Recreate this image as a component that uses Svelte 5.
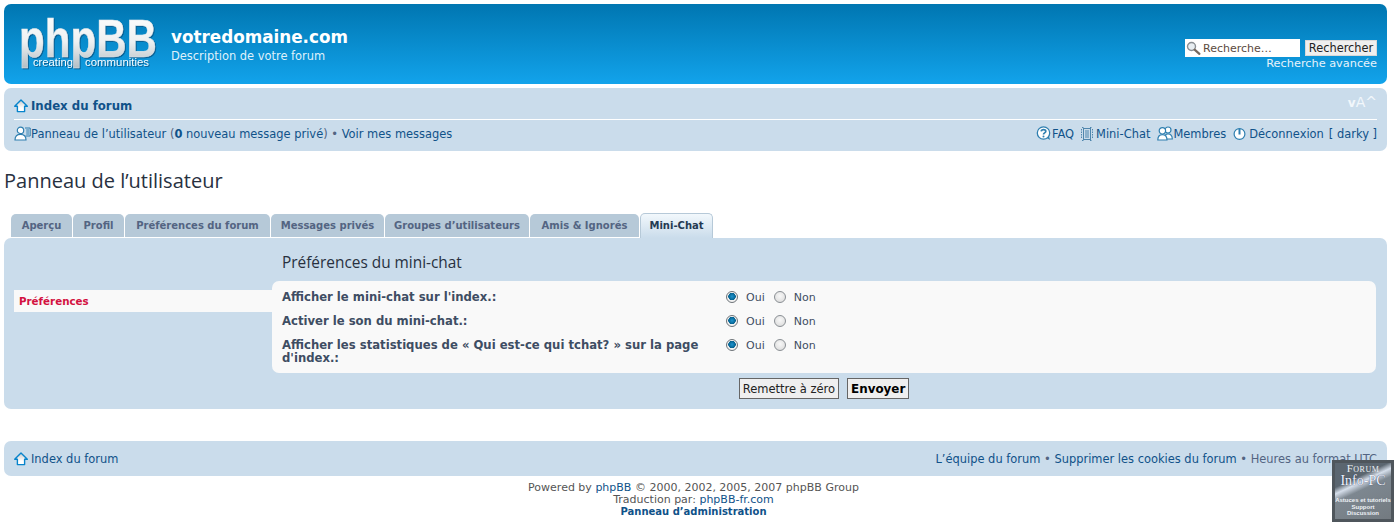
<script>
  const tabs = [
    { name: "Aperçu", width: 61 },
    { name: "Profil", width: 51 },
    { name: "Préférences du forum", width: 145 },
    { name: "Messages privés", width: 113 },
    { name: "Groupes d’utilisateurs", width: 144 },
    { name: "Amis & Ignorés", width: 109 },
    { name: "Mini-Chat", width: 73 },
  ];
  const active = "Mini-Chat";
  const options = [
    { label: "Afficher le mini-chat sur l'index.:", name: "index" },
    { label: "Activer le son du mini-chat.:", name: "sound" },
    { label: "Afficher les statistiques de « Qui est-ce qui tchat? » sur la page d'index.:", name: "stats" },
  ];
</script>

{#snippet home()}
  <svg class="ico" width="14" height="14" viewBox="0 0 14 14">
    <defs>
      <linearGradient id="roof" x1="0" y1="0" x2="0" y2="1">
        <stop offset="0" stop-color="#c9c9c9" />
        <stop offset="0.7" stop-color="#ffffff" />
      </linearGradient>
    </defs>
    <path d="M7 1 L13.3 7.2 H10.6 V12.6 H3.4 V7.2 H0.7 Z" fill="url(#roof)" stroke="#0784cc" stroke-width="1.4" stroke-linejoin="round" />
  </svg>
{/snippet}

<div class="wrap">
  <header class="headerbar">
    <a class="logo" href="#top" aria-label="phpBB">
      <svg width="140" height="52" viewBox="0 0 140 52">
        <defs>
          <linearGradient id="chrome" x1="0" y1="0" x2="0" y2="1">
            <stop offset="0" stop-color="#ffffff" />
            <stop offset="0.55" stop-color="#eef1f2" />
            <stop offset="1" stop-color="#b4bec4" />
          </linearGradient>
        </defs>
        <text x="0" y="38" class="logo-main" textLength="138" lengthAdjust="spacingAndGlyphs">phpBB</text>
        <text x="14" y="47" class="logo-sub" textLength="40" lengthAdjust="spacingAndGlyphs">creating</text>
        <text x="66" y="47" class="logo-sub" textLength="64" lengthAdjust="spacingAndGlyphs">communities</text>
      </svg>
    </a>
    <div class="site">
      <h1>votredomaine.com</h1>
      <p>Description de votre forum</p>
    </div>
    <div class="search">
      <div class="search-row">
        <div class="search-box">
          <svg width="15" height="14" viewBox="0 0 15 14">
            <circle cx="5.5" cy="5.5" r="4" fill="#e8eef2" stroke="#8a8f94" stroke-width="1.4" />
            <path d="M8.6 8.6 L13.4 12.8" stroke="#77695f" stroke-width="2.2" stroke-linecap="round" />
          </svg>
          <span>Recherche…</span>
        </div>
        <button class="search-btn">Rechercher</button>
      </div>
      <a href="#adv">Recherche avancée</a>
    </div>
  </header>

  <nav class="navbar">
    <div class="nav-top">
      <a class="crumb" href="#index">{@render home()}Index du forum</a>
      <span class="fontsize"><small>v</small>A^</span>
    </div>
    <div class="nav-bottom">
      <div class="nav-left">
        <svg class="ico" width="17" height="15" viewBox="0 0 17 15" fill="none">
          <path d="M11 2 H16.2 V10 H11.5 M12.2 4 H15.2 M12.2 6 H15.2 M12.2 8 H15.2" stroke="#2f7fb0" stroke-width="1" />
          <circle cx="6.5" cy="4.4" r="3.2" fill="#fff" stroke="#2f7fb0" stroke-width="1.2" />
          <path d="M1 14 C1 10 3 8.4 6.5 8.4 C10 8.4 12 10 12 14 Z" fill="#fff" stroke="#2f7fb0" stroke-width="1.2" />
        </svg><a href="#ucp">Panneau de l’utilisateur</a> (<a href="#pm"><b>0</b> nouveau message privé</a>) • <a href="#view">Voir mes messages</a>
      </div>
      <div class="nav-right">
        <a href="#faq">
          <svg class="ico" width="16" height="15" viewBox="0 0 16 15">
            <path d="M10 11.5 L14.2 14 L12.6 9.5 Z" fill="#2f7fb0" />
            <circle cx="7.5" cy="7" r="6.2" fill="#fff" stroke="#2f7fb0" stroke-width="1.3" />
            <path d="M5.2 5.4 C5.4 2.9 9.8 3 9.8 5.3 C9.8 6.9 7.5 6.8 7.5 8.4" fill="none" stroke="#2f7fb0" stroke-width="1.7" />
            <circle cx="7.5" cy="10.6" r="1" fill="#2f7fb0" />
          </svg>FAQ</a>
        <a href="#chat">
          <svg class="ico gap" width="12" height="14" viewBox="0 0 12 14" fill="none" stroke="#4f86ad" stroke-width="1">
            <rect x="2.5" y="1.5" width="7" height="11" />
            <path d="M4 4 H8 M4 6 H8 M4 8 H8 M4 10 H8" />
            <path d="M0.5 2 V12 M11.5 2 V12 M1 0.5 H3 M9 0.5 H11 M1 13.5 H3 M9 13.5 H11" stroke-dasharray="1.5 1" />
          </svg>Mini-Chat</a>
        <a href="#members">
          <svg class="ico" width="16" height="15" viewBox="0 0 16 15" fill="#fff" stroke="#2f7fb0" stroke-width="1.2">
            <circle cx="11" cy="4" r="3" />
            <path d="M7.5 13 C7.5 9.4 9 7.8 11 7.8 C13.4 7.8 15.3 9.4 15.3 13 Z" />
            <circle cx="5.4" cy="4.8" r="3.2" />
            <path d="M0.8 14 C0.8 10.2 2.8 8.6 5.4 8.6 C8 8.6 10 10.2 10 14 Z" />
          </svg>Membres</a>
        <a href="#logout">
          <svg class="ico gap" width="13" height="14" viewBox="0 0 13 14" fill="#fff" stroke="#2f7fb0" stroke-width="1.2">
            <circle cx="6.5" cy="7" r="5.4" />
            <path d="M6.5 1.5 V7.5" stroke-width="2" />
          </svg>Déconnexion<span class="user">[ darky ]</span></a>
      </div>
    </div>
  </nav>

  <h2>Panneau de l’utilisateur</h2>

  <ul class="tabs">
    {#each tabs as tab}
      <li class:active={tab.name === active} style="width: {tab.width}px"><a href="#tab">{tab.name}</a></li>
    {/each}
  </ul>

  <section class="panel">
    <aside class="menu">
      <a href="#prefs">Préférences</a>
    </aside>
    <div class="content">
      <h3>Préférences du mini-chat</h3>
      <form>
        <div class="fields">
          {#each options as opt}
            <div class="field">
              <label for={opt.name}>{opt.label}</label>
              <div class="choices">
                <label class="choice"><input id={opt.name} type="radio" name={opt.name} checked />Oui</label>
                <label class="choice"><input type="radio" name={opt.name} />Non</label>
              </div>
            </div>
          {/each}
        </div>
        <div class="submit">
          <button type="reset" class="btn">Remettre à zéro</button>
          <button type="button" class="btn primary">Envoyer</button>
        </div>
      </form>
    </div>
  </section>

  <nav class="navbar foot">
    <a class="crumb-plain" href="#index">{@render home()}Index du forum</a>
    <div class="foot-right">
      <a href="#team">L’équipe du forum</a> • <a href="#cookies">Supprimer les cookies du forum</a> • Heures au format UTC
    </div>
  </nav>

  <footer class="copyright">
    <div>Powered by <a href="#phpbb">phpBB</a> © 2000, 2002, 2005, 2007 phpBB Group</div>
    <div>Traduction par: <a href="#fr">phpBB-fr.com</a></div>
    <div><a class="admin" href="#acp">Panneau d’administration</a></div>
  </footer>
</div>

<div class="badge">
  <div class="badge-forum">Forum</div>
  <div class="badge-name">Info-PC</div>
  <div class="badge-tags">Astuces et tutoriels<br />Support<br />Discussion</div>
</div>

<style>
  :global(body) {
    background: #fff;
    color: #536482;
    font-family: "DejaVu Sans", Verdana, sans-serif;
    font-size: 11.45px;
    overflow: hidden;
  }

  a {
    color: #105289;
    text-decoration: none;
  }

  .wrap {
    padding: 4px 8px 0 4px;
  }

  .headerbar {
    display: flex;
    align-items: flex-start;
    height: 80px;
    box-sizing: border-box;
    padding: 15px 10px 0 15px;
    border-radius: 7px;
    background: linear-gradient(#0076b1, #12a3eb);
    color: #fff;
  }

  .logo {
    display: block;
    height: 52px;
  }

  .logo svg {
    overflow: visible;
    filter: drop-shadow(1px 1px 0 #0a5f92);
  }

  .logo-main {
    font-family: "Liberation Sans", Arial, sans-serif;
    font-size: 53px;
    font-weight: bold;
    fill: url(#chrome);
    stroke: #dfe6ea;
    stroke-width: 0.5;
  }

  .logo-sub {
    font-family: "Liberation Sans", Arial, sans-serif;
    font-size: 11px;
    fill: #fff;
  }

  .site {
    margin-left: 12px;
    padding-top: 7px;
  }

  h1 {
    margin: 0;
    font-size: 16.8px;
    line-height: 22px;
    font-weight: 600;
    font-family: "DejaVu Sans", sans-serif;
    color: #fff;
  }

  .site p {
    margin: 1px 0 0;
    font-size: 11.45px;
    line-height: 14px;
    color: #dff1fb;
  }

  .search {
    margin-left: auto;
    padding-top: 20px;
    text-align: right;
  }

  .search-row {
    display: flex;
    gap: 5px;
    align-items: center;
  }

  .search-box {
    display: flex;
    align-items: center;
    gap: 2px;
    width: 115px;
    height: 18px;
    box-sizing: border-box;
    background: #fff;
    color: #5c4a3e;
    padding-left: 1px;
    font-size: 11px;
  }

  .search-btn {
    width: 72px;
    height: 16px;
    padding: 0;
    border: 1px solid #d8d8d8;
    background: #efefef;
    color: #222;
    font: 11.4px "DejaVu Sans", sans-serif;
  }

  .search a {
    display: block;
    line-height: 14px;
    font-size: 11.3px;
    color: #e6f3fb;
  }

  .navbar {
    margin-top: 4px;
    background: #cadceb;
    border-radius: 7px;
    padding: 0 10px;
  }

  .nav-top {
    display: flex;
    justify-content: space-between;
    height: 31px;
    border-bottom: 1px solid #fff;
    align-items: center;
  }

  .crumb {
    font-weight: bold;
    font-size: 11.75px;
    display: flex;
    align-items: center;
    gap: 3px;
    padding-top: 4px;
  }

  .crumb-plain {
    display: flex;
    align-items: center;
    gap: 3px;
    padding-top: 1px;
  }

  .ico {
    flex: none;
    vertical-align: -3px;
  }

  .fontsize {
    color: #f2f7fb;
    font-size: 14px;
    line-height: 16px;
    align-self: flex-start;
    margin-top: 6px;
  }

  .fontsize small {
    font-size: 12px;
    font-weight: bold;
  }

  .nav-bottom {
    display: flex;
    justify-content: space-between;
    align-items: center;
    height: 27px;
    padding-bottom: 4px;
  }

  .nav-right {
    display: flex;
    gap: 7px;
  }

  .nav-right a {
    display: flex;
    align-items: center;
  }

  .gap {
    margin-right: 3px;
  }

  .user {
    margin-left: 5px;
  }

  h2 {
    margin: 19px 0 0;
    font-family: "Open Sans", sans-serif;
    font-size: 20px;
    line-height: 22px;
    font-weight: 400;
    color: #28313f;
  }

  .tabs {
    display: flex;
    gap: 1px;
    list-style: none;
    margin: 21px 0 0 7px;
    padding: 0;
    height: 25px;
    align-items: flex-end;
  }

  .tabs li {
    height: 23px;
    margin-bottom: 1px;
    background: #b6c9d8;
    border-radius: 5px 5px 0 0;
    text-align: center;
  }

  .tabs a {
    display: block;
    line-height: 24px;
    font-size: 10px;
    font-weight: bold;
    white-space: nowrap;
    color: #536482;
  }

  .tabs li.active {
    height: 25px;
    margin-bottom: 0;
    box-sizing: border-box;
    border: 1px solid #b6c9d8;
    border-bottom: 0;
    background: linear-gradient(#f2f8fc, #cadceb);
  }

  .tabs li.active a {
    color: #243a52;
    line-height: 23px;
  }

  .panel {
    display: flex;
    height: 171px;
    background: #cadceb;
    border-radius: 7px;
    padding: 0 11px 0 10px;
  }

  .menu {
    width: 258px;
    flex: none;
    padding-top: 52px;
  }

  .menu a {
    display: block;
    height: 22px;
    line-height: 23px;
    padding-left: 5px;
    background: #f9f9f9;
    color: #d31141;
    font-size: 10.3px;
    font-weight: bold;
  }

  .content {
    flex: 1;
    min-width: 0;
  }

  h3 {
    margin: 15px 0 0 10px;
    font-family: "Open Sans", sans-serif;
    font-size: 15.4px;
    line-height: 20px;
    font-weight: 400;
    color: #28313f;
  }

  .fields {
    margin-top: 8px;
    background: #f9f9f9;
    border-radius: 7px;
    padding: 4px 10px 8px;
  }

  .field {
    display: flex;
    min-height: 24px;
  }

  .field > label {
    width: 444px;
    flex: none;
    padding: 6px 20px 0 0;
    box-sizing: border-box;
    font-size: 11.65px;
    font-weight: bold;
    line-height: 13px;
    color: #3e4d63;
  }

  .choices {
    display: flex;
    gap: 9px;
    padding-top: 4px;
  }

  .choice {
    display: flex;
    align-items: center;
    gap: 8px;
    height: 16px;
    font-size: 11px;
    color: #3e4d63;
  }

  input[type="radio"] {
    appearance: none;
    width: 12px;
    height: 12px;
    margin: 0;
    border-radius: 50%;
    border: 1px solid #8a8f94;
    background: radial-gradient(circle at 50% 40%, #f8f8f8, #d8d8d8);
  }

  input[type="radio"]:checked {
    background: radial-gradient(circle at 50% 45%, #1d94cf 0, #05618f 3.5px, #f2f2f2 4px);
    border-color: #6d7378;
  }

  .submit {
    display: flex;
    justify-content: center;
    gap: 8px;
    margin-top: 5px;
  }

  .btn {
    height: 21px;
    padding: 1px 3px 0;
    border: 1px solid #666;
    background: #efefef;
    color: #222;
    font: 11.5px "DejaVu Sans", sans-serif;
  }

  .primary {
    font-size: 11.9px;
    font-weight: bold;
    color: #000;
  }

  .foot {
    margin-top: 32px;
    height: 35px;
    display: flex;
    align-items: center;
    justify-content: space-between;
  }

  .copyright {
    margin-top: 6px;
    padding-right: 4px;
    text-align: center;
    font-size: 11px;
    line-height: 12px;
    color: #555;
  }

  .admin {
    font-size: 10px;
    font-weight: bold;
  }

  .badge {
    position: fixed;
    left: 1332px;
    top: 460px;
    width: 62px;
    height: 62px;
    box-sizing: border-box;
    border: 3px solid #4f565c;
    background: linear-gradient(155deg, #5b6670 0 30%, #d5deea 38%, #7d8790 48%, #737a80 100%);
    color: #eef2f6;
    text-align: center;
    overflow: hidden;
  }

  .badge-forum {
    font-family: "Liberation Serif", serif;
    font-variant: small-caps;
    font-size: 11px;
    line-height: 11px;
    letter-spacing: 0.5px;
  }

  .badge-name {
    font-family: "Liberation Serif", serif;
    font-size: 14px;
    line-height: 14px;
    color: #f4f6ff;
    text-shadow: 0 0 1px #1d2a52;
    white-space: nowrap;
  }

  .badge-tags {
    margin-top: 9px;
    font-family: "Liberation Sans", sans-serif;
    font-size: 6px;
    line-height: 6.5px;
    font-weight: bold;
    white-space: nowrap;
  }
</style>
